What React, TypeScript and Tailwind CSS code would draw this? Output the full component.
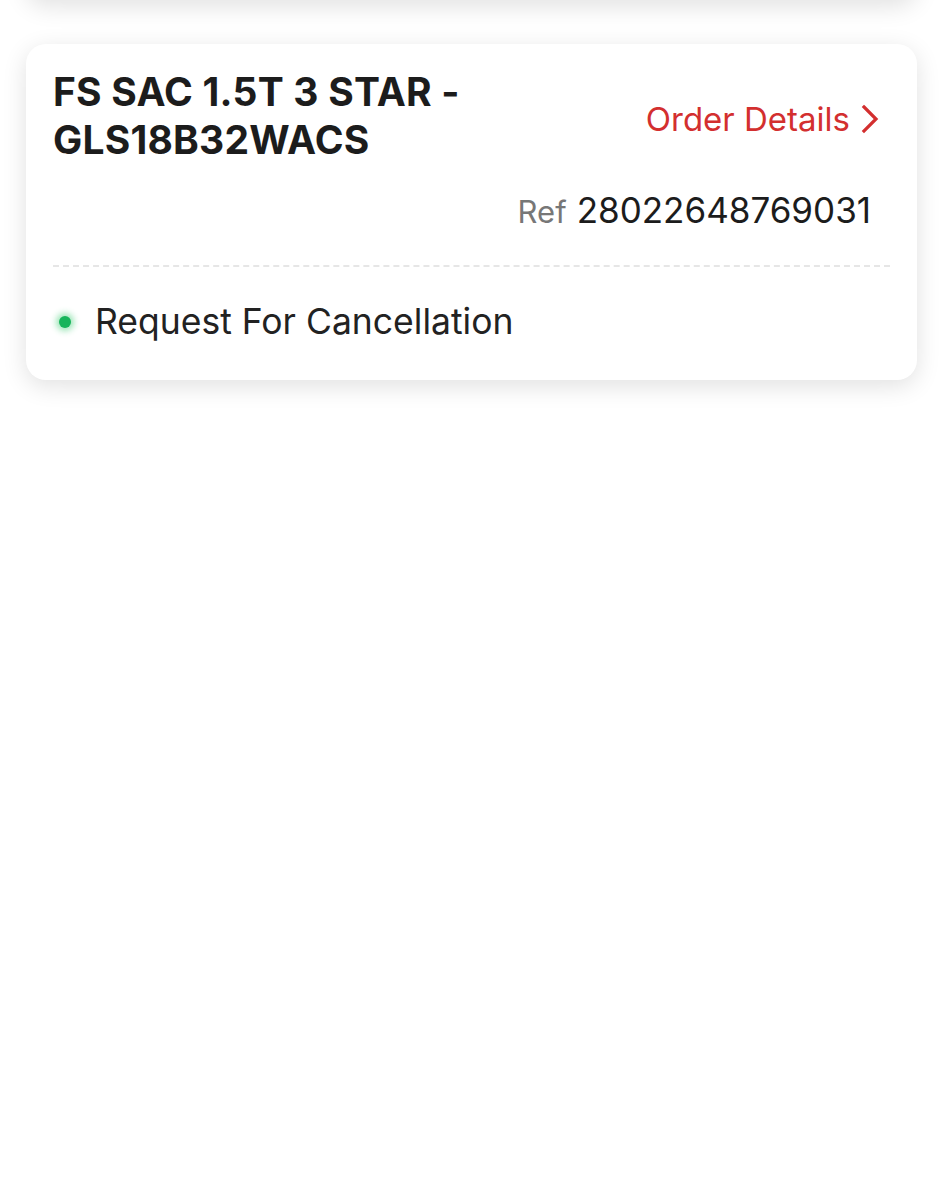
export default function App() {
  return (
    <div className="min-h-[1200px] bg-white overflow-hidden" style={{ fontFamily: "Inter, 'Noto Sans', sans-serif" }}>
      {/* previous card, mostly scrolled off */}
      <div className="mx-[26px] -mt-[40px] h-[40px] rounded-[20px] bg-white shadow-[0_6px_24px_rgba(0,0,0,0.12)]" />

      <div className="mx-[26px] mt-[44px] rounded-[20px] bg-white shadow-[0_6px_24px_rgba(0,0,0,0.12)] px-[27px] pt-[24px] pb-[36px]">
        <div className="flex items-start justify-between gap-4">
          <h2 className="flex-1 text-[39px] leading-[48px] font-bold text-[#1c1c1c] tracking-[0.2px]">
            FS SAC 1.5T 3 STAR - GLS18B32WACS
          </h2>
          <a href="#" className="shrink-0 mt-[31px] flex items-center gap-[10px] pr-[10px] text-[33px] leading-[40px] text-[#d32f2f]">
            Order Details
            <svg width="20" height="30" viewBox="0 0 20 30" fill="none" stroke="currentColor" strokeWidth="3.2" strokeLinecap="square">
              <path d="M4 3 L16 15 L4 27" />
            </svg>
          </a>
        </div>

        <div className="mt-[20px] flex items-baseline justify-end gap-[10px] pr-[19px]">
          <span className="text-[31px] text-[#777777]">Ref</span>
          <span className="text-[35px] text-[#1c1c1c]">28022648769031</span>
        </div>

        <div className="mt-[28px] border-t-2 border-dashed border-[#e6e6e6]" />

        <div className="mt-[33px] flex items-center gap-[24px]">
          <span className="ml-[6px] w-[12px] h-[12px] rounded-full bg-[#16b45a] shadow-[0_0_6px_3px_rgba(34,197,94,0.45)]" />
          <span className="text-[35.5px] leading-[44px] text-[#222222]">Request For Cancellation</span>
        </div>
      </div>
    </div>
  );
}
